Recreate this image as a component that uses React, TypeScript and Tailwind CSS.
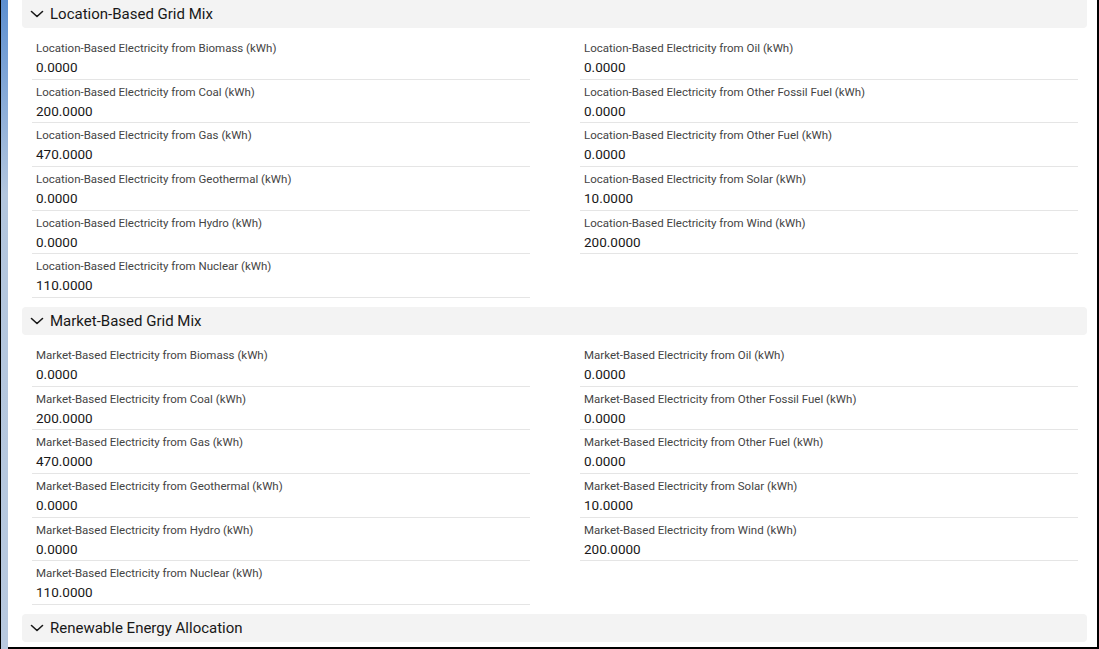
import React from "react";

const font = { fontFamily: "Roboto, 'Noto Sans', 'Liberation Sans', sans-serif" };

type Field = { label: string; value: string };

function Chevron() {
  return (
    <svg width="14" height="8" viewBox="0 0 14 8" className="shrink-0">
      <path d="M1.5 1.5 L7 6.5 L12.5 1.5" fill="none" stroke="#181818" strokeWidth="1.6" strokeLinecap="round" strokeLinejoin="round" />
    </svg>
  );
}

function Header({ title, first }: { title: string; first?: boolean }) {
  return (
    <div
      className={`h-[28px] bg-[#f3f3f3] flex items-center pl-[8px] gap-[6px] ${first ? "rounded-b-[4px]" : "rounded-[4px]"}`}
    >
      <Chevron />
      <span className="text-[15px] leading-[20px] text-[#181818]">{title}</span>
    </div>
  );
}

function FieldRow({ f }: { f: Field }) {
  return (
    <div className="h-[43.67px] border-b border-[#e5e5e5] pt-[4px] px-[4px] flex flex-col">
      <div className="text-[11.5px] leading-[16px] text-[#444444]">{f.label}</div>
      <div className="text-[13.5px] leading-[20px] mt-[1px] text-[#181818]">{f.value}</div>
    </div>
  );
}

function Section({ title, left, right, first }: { title: string; left: Field[]; right: Field[]; first?: boolean }) {
  return (
    <div className="flex flex-col">
      <Header title={title} first={first} />
      <div className="grid grid-cols-2 gap-x-[50px] pl-[10px] pr-[9px] pt-[8px] pb-[9px]">
        <div className="flex flex-col">
          {left.map((f) => (
            <FieldRow key={f.label} f={f} />
          ))}
        </div>
        <div className="flex flex-col">
          {right.map((f) => (
            <FieldRow key={f.label} f={f} />
          ))}
        </div>
      </div>
    </div>
  );
}

function make(prefix: string) {
  const left: Field[] = [
    { label: `${prefix} Electricity from Biomass (kWh)`, value: "0.0000" },
    { label: `${prefix} Electricity from Coal (kWh)`, value: "200.0000" },
    { label: `${prefix} Electricity from Gas (kWh)`, value: "470.0000" },
    { label: `${prefix} Electricity from Geothermal (kWh)`, value: "0.0000" },
    { label: `${prefix} Electricity from Hydro (kWh)`, value: "0.0000" },
    { label: `${prefix} Electricity from Nuclear (kWh)`, value: "110.0000" },
  ];
  const right: Field[] = [
    { label: `${prefix} Electricity from Oil (kWh)`, value: "0.0000" },
    { label: `${prefix} Electricity from Other Fossil Fuel (kWh)`, value: "0.0000" },
    { label: `${prefix} Electricity from Other Fuel (kWh)`, value: "0.0000" },
    { label: `${prefix} Electricity from Solar (kWh)`, value: "10.0000" },
    { label: `${prefix} Electricity from Wind (kWh)`, value: "200.0000" },
  ];
  return { left, right };
}

export default function App() {
  const loc = make("Location-Based");
  const mkt = make("Market-Based");
  return (
    <div className="w-[1099px] h-[649px] overflow-hidden flex bg-white" style={font}>
      <div className="w-[8px] h-full border-l border-black bg-gradient-to-b from-[#5d8fd0] via-[#b3c6de] via-30% to-[#b8c9df] shrink-0" />
      <div className="flex-1 h-full border-r-[2px] border-b-[2px] border-black pl-[14px] pr-[10px] overflow-hidden">
        <Section title="Location-Based Grid Mix" left={loc.left} right={loc.right} first />
        <Section title="Market-Based Grid Mix" left={mkt.left} right={mkt.right} />
        <Header title="Renewable Energy Allocation" />
      </div>
    </div>
  );
}
